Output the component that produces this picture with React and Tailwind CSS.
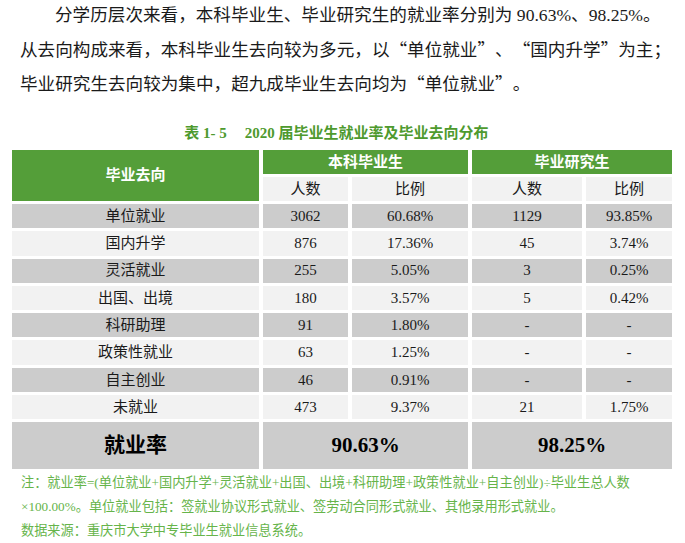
import React from "react";

// Table rows: destination, undergrad count, undergrad ratio, postgrad count, postgrad ratio
const rows = [
  ["单位就业", "3062", "60.68%", "1129", "93.85%"],
  ["国内升学", "876", "17.36%", "45", "3.74%"],
  ["灵活就业", "255", "5.05%", "3", "0.25%"],
  ["出国、出境", "180", "3.57%", "5", "0.42%"],
  ["科研助理", "91", "1.80%", "-", "-"],
  ["政策性就业", "63", "1.25%", "-", "-"],
  ["自主创业", "46", "0.91%", "-", "-"],
  ["未就业", "473", "9.37%", "21", "1.75%"],
];

const font = "font-['Liberation_Serif','Noto_Sans_CJK_SC',serif]";

function Cell({ children, className }) {
  return (
    <div className={`flex items-center justify-center ${className}`}>{children}</div>
  );
}

// full-width quote mark, as in the source document
function Q({ children }) {
  return (
    <span className="inline-block w-[1em] text-center font-['Noto_Sans_CJK_SC',sans-serif]">
      {children}
    </span>
  );
}

export default function App() {
  return (
    <div className={`w-[685px] h-[543px] bg-white overflow-hidden ${font} text-[#1a1a1a]`}>
      {/* Intro paragraph */}
      <div className="px-[20px] text-[17.6px]">
        <div className="h-[34px] leading-[30px] pl-[35px] whitespace-nowrap">
          分学历层次来看，本科毕业生、毕业研究生的就业率分别为 90.63%、98.25%。
        </div>
        <div className="h-[34px] leading-[30px] whitespace-nowrap">
          从去向构成来看，本科毕业生去向较为多元，以<Q>“</Q>单位就业<Q>”</Q>、<Q>“</Q>国内升学<Q>”</Q>为主；
        </div>
        <div className="h-[34px] leading-[30px] whitespace-nowrap">
          毕业研究生去向较为集中，超九成毕业生去向均为<Q>“</Q>单位就业<Q>”</Q>。
        </div>
      </div>

      {/* Table caption */}
      <div className="mt-[21px] h-[20px] leading-[20px] text-center text-[15px] font-bold text-[#4e9a2e] pr-[12px] whitespace-nowrap">
        表 1- 5<span className="inline-block w-[18px]" />2020 届毕业生就业率及毕业去向分布
      </div>

      {/* Table */}
      <div className="mt-[7px] ml-[12px] grid grid-cols-[247px_85px_116px_110px_86px] grid-rows-[24px_24px_repeat(8,24.3px)_47px] gap-x-[4px] gap-y-[3px] text-[15px]">
        <Cell className="row-span-2 bg-[#549e39] text-white font-bold">毕业去向</Cell>
        <Cell className="col-span-2 bg-[#549e39] text-white font-bold">本科毕业生</Cell>
        <Cell className="col-span-2 bg-[#549e39] text-white font-bold">毕业研究生</Cell>
        <Cell className="bg-[#f2f2f2]">人数</Cell>
        <Cell className="bg-[#f2f2f2]">比例</Cell>
        <Cell className="bg-[#f2f2f2]">人数</Cell>
        <Cell className="bg-[#f2f2f2]">比例</Cell>

        {rows.map((r, i) =>
          r.map((v, j) => (
            <Cell
              key={`${i}-${j}`}
              className={i % 2 === 0 ? "bg-[#cccccc]" : "bg-[#f2f2f2]"}
            >
              {v}
            </Cell>
          ))
        )}

        <Cell className="bg-[#cccccc] text-[21px] font-bold text-black">就业率</Cell>
        <Cell className="col-span-2 bg-[#cccccc] text-[21px] font-bold text-black">90.63%</Cell>
        <Cell className="col-span-2 bg-[#cccccc] text-[21px] font-bold text-black">98.25%</Cell>
      </div>

      {/* Footnotes */}
      <div className="mt-[2px] pl-[21px] text-[13.2px] leading-[24px] text-[#66b44a] whitespace-nowrap">
        <div>注：就业率=(单位就业+国内升学+灵活就业+出国、出境+科研助理+政策性就业+自主创业)÷毕业生总人数</div>
        <div>×100.00%。单位就业包括：签就业协议形式就业、签劳动合同形式就业、其他录用形式就业。</div>
        <div>数据来源：重庆市大学中专毕业生就业信息系统。</div>
      </div>
    </div>
  );
}
